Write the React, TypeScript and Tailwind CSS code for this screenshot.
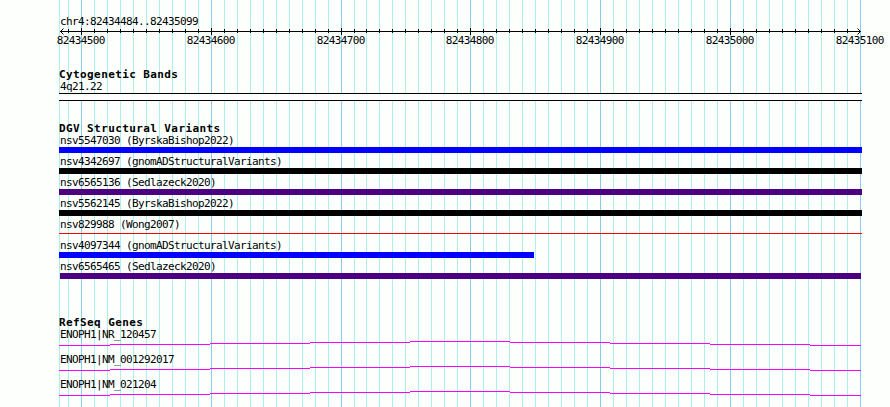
const minorLines = Array.from({ length: 62 }, (_, i) => 68 + 13 * i - (i >= 23 ? 1 : 0));

const majorTicks = [
  { x: 81, label: "82434500" },
  { x: 211, label: "82434600" },
  { x: 341, label: "82434700" },
  { x: 470, label: "82434800" },
  { x: 600, label: "82434900" },
  { x: 730, label: "82435000" },
  { x: 860, label: "82435100" },
];

const variants = [
  { name: "nsv5547030 (ByrskaBishop2022)", bar: "h-1.5 w-[803px] bg-[#0000ff]" },
  { name: "nsv4342697 (gnomADStructuralVariants)", bar: "h-1.5 w-[803px] bg-black" },
  { name: "nsv6565136 (Sedlazeck2020)", bar: "h-1.5 w-[803px] bg-[#4b0082]" },
  { name: "nsv5562145 (ByrskaBishop2022)", bar: "h-1.5 w-[803px] bg-black" },
  { name: "nsv829988 (Wong2007)", bar: "mt-0.5 h-px w-[803px] bg-[#ff0000]" },
  { name: "nsv4097344 (gnomADStructuralVariants)", bar: "h-1.5 w-[475px] bg-[#0000ff]" },
  { name: "nsv6565465 (Sedlazeck2020)", bar: "ml-px h-1.5 w-[801px] bg-[#4b0082]" },
];

const genes = ["ENOPH1|NR_120457", "ENOPH1|NM_001292017", "ENOPH1|NM_021204"];

// x, y and width of each piece of the intron line
const intron = [
  [0, 4, 51],
  [51, 3, 100],
  [151, 2, 100],
  [251, 1, 100],
  [351, 0, 100],
  [451, 1, 100],
  [551, 2, 100],
  [651, 3, 100],
  [751, 4, 51],
];

function isMajor(x: number) {
  return majorTicks.some((t) => t.x === x);
}

function Grid() {
  return (
    <svg
      className="absolute inset-0"
      width="890"
      height="407"
      shapeRendering="crispEdges"
    >
      <rect x="59" y="0" width="1" height="407" fill="#afeeee" />
      {minorLines.map((x) => (
        <rect
          key={x}
          x={x}
          y="0"
          width="1"
          height="407"
          fill={isMajor(x) ? "#87ceeb" : "#afeeee"}
        />
      ))}
    </svg>
  );
}

function Ruler() {
  return (
    <svg className="block" width="890" height="26" viewBox="0 24 890 26">
      <g shapeRendering="crispEdges">
        <rect x="60" y="31" width="801" height="1" />
        {minorLines.slice(0, -1).map((x) => (
          <rect
            key={x}
            x={x}
            y={isMajor(x) ? 28 : 29}
            width="1"
            height={isMajor(x) ? 7 : 4}
          />
        ))}
      </g>
      <path d="M63.5 28.5l-3 3 3 3M857.5 28.5l3 3-3 3" fill="none" stroke="#000" />
      {majorTicks.map((t) => (
        <text key={t.label} x={t.x - 24.3} y="44" letterSpacing="-0.622">
          {t.label}
        </text>
      ))}
    </svg>
  );
}

function Title({ children }: { children: string }) {
  return (
    <h2 className="-mb-0.5 h-3 text-[11px] leading-[14px] font-bold tracking-[0.4px]">
      {children}
    </h2>
  );
}

function Label({ children }: { children: string }) {
  return <p className="h-[15px] pl-px leading-[17px]">{children}</p>;
}

export default function App() {
  return (
    <main className="relative h-[407px] w-[890px] overflow-hidden bg-[#fdfffc] font-['DejaVu_Sans_Mono',monospace] text-[11px] tracking-[-0.622px] whitespace-pre text-black">
      <Grid />
      <div className="relative pt-[13px]">
        <div className="h-[11px] pl-[60px] leading-[17px]">chr4:82434484..82435099</div>
        <Ruler />

        <section className="pt-[18px] pl-[59px]">
          <Title>Cytogenetic Bands</Title>
          <Label>4q21.22</Label>
          <div className="h-2 w-[803px] border-y border-black bg-white" />
        </section>

        <section className="pt-[21px] pl-[59px]">
          <Title>DGV Structural Variants</Title>
          {variants.map((v) => (
            <div key={v.name} className="flex h-[21px] flex-col">
              <Label>{v.name}</Label>
              <div className={v.bar} />
            </div>
          ))}
        </section>

        <section className="pt-[37px] pl-[59px]">
          <Title>RefSeq Genes</Title>
          {genes.map((g) => (
            <div key={g} className="h-[25px]">
              <Label>{g}</Label>
              <svg className="block" width="802" height="5" shapeRendering="crispEdges">
                {intron.map(([x, y, w]) => (
                  <rect key={x} x={x} y={y} width={w} height="1" fill="#ff00ff" />
                ))}
              </svg>
            </div>
          ))}
        </section>
      </div>
    </main>
  );
}
